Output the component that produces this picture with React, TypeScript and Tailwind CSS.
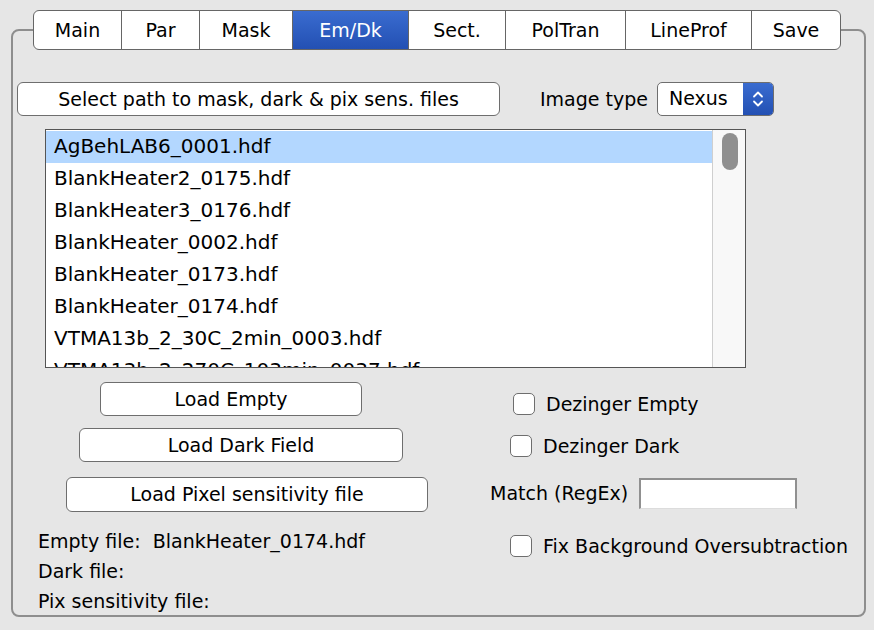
const tabs = [
  { t: "Main", w: 87 },
  { t: "Par", w: 78 },
  { t: "Mask", w: 93 },
  { t: "Em/Dk", w: 116, on: true },
  { t: "Sect.", w: 97 },
  { t: "PolTran", w: 120 },
  { t: "LineProf", w: 126 },
  { t: "Save", w: 89 },
];

const files = [
  "AgBehLAB6_0001.hdf",
  "BlankHeater2_0175.hdf",
  "BlankHeater3_0176.hdf",
  "BlankHeater_0002.hdf",
  "BlankHeater_0173.hdf",
  "BlankHeater_0174.hdf",
  "VTMA13b_2_30C_2min_0003.hdf",
  "VTMA13b_2_270C_103min_0037.hdf",
];

function Check({ label, ml, mt }: { label: string; ml: string; mt: string }) {
  return (
    <div className={`flex items-center h-[30px] ${ml} ${mt}`}>
      <span className="w-[22px] h-[22px] rounded-[5px] border-[1.5px] border-[#6e6e6e] bg-white shrink-0" />
      <span className="ml-[11px]">{label}</span>
    </div>
  );
}

export default function App() {
  return (
    <div className="w-[874px] h-[630px] bg-[#e6e6e6] pt-[10px] text-[19px] text-black overflow-hidden" style={{ fontFamily: '"DejaVu Sans", sans-serif' }}>
      {/* tab strip sits over the frame's top border */}
      <div className="relative z-10 ml-[33px] flex h-[40px] w-fit rounded-[6px] border-[1.5px] border-[#666] bg-white overflow-hidden">
        {tabs.map((t, i) => (
          <div
            key={t.t}
            style={{ width: t.w }}
            className={`flex items-center justify-center ${i > 0 ? "border-l-[1.5px] border-[#666]" : ""} ${t.on ? "bg-gradient-to-b from-[#3a6cd0] to-[#2350b3] text-white" : ""}`}
          >
            {t.t}
          </div>
        ))}
      </div>

      <div className="-mt-[21px] ml-[11px] w-[855px] h-[588px] rounded-[8px] border-2 border-[#8e8e8e]">
        <div className="mt-[51px] flex items-center">
          <button className="ml-[4px] w-[483px] h-[34px] rounded-[6px] border-[1.5px] border-[#6e6e6e] bg-white">
            Select path to mask, dark &amp; pix sens. files
          </button>
          <span className="ml-[40px]">Image type</span>
          <div className="ml-[9px] flex h-[34px] w-[117px] rounded-[5px] border-[1.5px] border-[#6e6e6e] bg-white overflow-hidden">
            <span className="flex-1 pl-[11px] leading-[31px]">Nexus</span>
            <span className="flex w-[30px] items-center justify-center bg-gradient-to-b from-[#3a6cd0] to-[#2350b3]">
              <svg width="12" height="20" viewBox="0 0 12 20" fill="none" stroke="white" strokeWidth="1.8" strokeLinecap="round" strokeLinejoin="round">
                <path d="M2 7.5 L6 3.5 L10 7.5" />
                <path d="M2 12.5 L6 16.5 L10 12.5" />
              </svg>
            </span>
          </div>
        </div>

        <div className="mt-[13px] ml-[32px] flex h-[239px] w-[701px] border-[1.5px] border-[#555] bg-white overflow-hidden">
          <div className="flex-1 pt-px text-[20px]">
            {files.map((f, i) => (
              <div key={f} className={`h-[32px] pl-[8px] leading-[30px] ${i === 0 ? "bg-[#b3d7ff]" : ""}`}>
                {f}
              </div>
            ))}
          </div>
          <div className="w-[33px] border-l border-[#cfcfcf] bg-[#f8f8f8] pt-[3px]">
            <div className="ml-[9px] h-[37px] w-[16px] rounded-full bg-[#8f8f8f]" />
          </div>
        </div>

        <div className="flex">
          <div className="w-[467px] flex flex-col items-start">
            <button className="mt-[14px] ml-[87px] w-[262px] h-[34px] rounded-[6px] border-[1.5px] border-[#6e6e6e] bg-white">Load Empty</button>
            <button className="mt-[12px] ml-[66px] w-[324px] h-[34px] rounded-[6px] border-[1.5px] border-[#6e6e6e] bg-white">Load Dark Field</button>
            <button className="mt-[15px] ml-[53px] w-[362px] h-[35px] rounded-[6px] border-[1.5px] border-[#6e6e6e] bg-white">Load Pixel sensitivity file</button>
            <div className="mt-[14px] ml-[25px] leading-[30px]">
              <div>Empty file:&nbsp;&nbsp;BlankHeater_0174.hdf</div>
              <div>Dark file:</div>
              <div>Pix sensitivity file:</div>
            </div>
          </div>

          <div className="flex flex-col items-start">
            <Check label="Dezinger Empty" ml="ml-[33px]" mt="mt-[21px]" />
            <Check label="Dezinger Dark" ml="ml-[30px]" mt="mt-[12px]" />
            <div className="mt-[17px] ml-[10px] flex items-center">
              <span>Match (RegEx)</span>
              <span className="ml-[11px] h-[31px] w-[158px] border-x-2 border-t-2 border-b border-[#909090] border-b-[#dcdcdc] bg-white" />
            </div>
            <Check label="Fix Background Oversubtraction" ml="ml-[30px]" mt="mt-[22px]" />
          </div>
        </div>
      </div>
    </div>
  );
}
